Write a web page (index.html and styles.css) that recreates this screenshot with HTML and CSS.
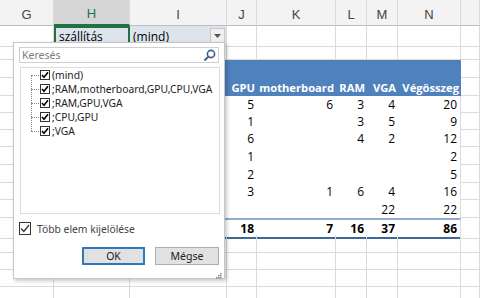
FILE: index.html
```html
<!DOCTYPE html>
<html>
<head>
    <title>Kimutatás szűrő</title>
    <link rel="stylesheet" href="styles.css">
</head>
<body>
    <div class="sheet">
        <div class="row head">
            <div class="colhead">G</div>
            <div class="colhead active">H</div>
            <div class="colhead">I</div>
            <div class="colhead">J</div>
            <div class="colhead">K</div>
            <div class="colhead">L</div>
            <div class="colhead">M</div>
            <div class="colhead">N</div>
            <div class="colhead"></div>
        </div>
        <div class="row">
            <div class="c"></div>
            <div class="c filter selected">szállítás</div>
            <div class="c filter value">(mind)<span class="dropbtn"><svg width="7" height="4" viewBox="0 0 7 4"><path d="M0 0h7L3.5 4z" fill="#555"/></svg></span></div>
            <div class="c"></div><div class="c"></div><div class="c"></div><div class="c"></div><div class="c"></div><div class="c"></div>
        </div>
        <div class="row">
            <div class="c"></div><div class="c"></div><div class="c"></div><div class="c"></div><div class="c"></div><div class="c"></div><div class="c"></div><div class="c"></div><div class="c"></div>
        </div>
        <div class="row tall">
            <div class="c"></div>
            <div class="ph"></div><div class="ph"></div><div class="ph"></div><div class="ph"></div><div class="ph"></div><div class="ph"></div><div class="ph"></div>
            <div class="c"></div>
        </div>
        <div class="row tall">
            <div class="c"></div>
            <div class="ph"></div><div class="ph"></div>
            <div class="ph">GPU</div>
            <div class="ph">motherboard</div>
            <div class="ph">RAM</div>
            <div class="ph">VGA</div>
            <div class="ph">Végösszeg</div>
            <div class="c"></div>
        </div>
        <div class="row">
            <div class="c"></div>
            <div class="pv"></div><div class="pv"></div>
            <div class="pv">5</div><div class="pv">6</div><div class="pv">3</div><div class="pv">4</div><div class="pv last">20</div>
            <div class="c"></div>
        </div>
        <div class="row">
            <div class="c"></div>
            <div class="pv"></div><div class="pv"></div>
            <div class="pv">1</div><div class="pv"></div><div class="pv">3</div><div class="pv">5</div><div class="pv last">9</div>
            <div class="c"></div>
        </div>
        <div class="row">
            <div class="c"></div>
            <div class="pv"></div><div class="pv"></div>
            <div class="pv">6</div><div class="pv"></div><div class="pv">4</div><div class="pv">2</div><div class="pv last">12</div>
            <div class="c"></div>
        </div>
        <div class="row tall">
            <div class="c"></div>
            <div class="pv"></div><div class="pv"></div>
            <div class="pv">1</div><div class="pv"></div><div class="pv"></div><div class="pv"></div><div class="pv last">2</div>
            <div class="c"></div>
        </div>
        <div class="row tall">
            <div class="c"></div>
            <div class="pv"></div><div class="pv"></div>
            <div class="pv">2</div><div class="pv"></div><div class="pv"></div><div class="pv"></div><div class="pv last">5</div>
            <div class="c"></div>
        </div>
        <div class="row">
            <div class="c"></div>
            <div class="pv"></div><div class="pv"></div>
            <div class="pv">3</div><div class="pv">1</div><div class="pv">6</div><div class="pv">4</div><div class="pv last">16</div>
            <div class="c"></div>
        </div>
        <div class="row tall">
            <div class="c"></div>
            <div class="pv"></div><div class="pv"></div>
            <div class="pv"></div><div class="pv"></div><div class="pv"></div><div class="pv">22</div><div class="pv last">22</div>
            <div class="c"></div>
        </div>
        <div class="row">
            <div class="c"></div>
            <div class="tot"></div><div class="tot"></div>
            <div class="tot">18</div><div class="tot">7</div><div class="tot">16</div><div class="tot">37</div><div class="tot last">86</div>
            <div class="c"></div>
        </div>
        <div class="row tall">
            <div class="c"></div><div class="c"></div><div class="c"></div><div class="c"></div><div class="c"></div><div class="c"></div><div class="c"></div><div class="c"></div><div class="c"></div>
        </div>
        <div class="row">
            <div class="c"></div><div class="c"></div><div class="c"></div><div class="c"></div><div class="c"></div><div class="c"></div><div class="c"></div><div class="c"></div><div class="c"></div>
        </div>
        <div class="row">
            <div class="c"></div><div class="c"></div><div class="c"></div><div class="c"></div><div class="c"></div><div class="c"></div><div class="c"></div><div class="c"></div><div class="c"></div>
        </div>
        <div class="row">
            <div class="c"></div><div class="c"></div><div class="c"></div><div class="c"></div><div class="c"></div><div class="c"></div><div class="c"></div><div class="c"></div><div class="c"></div>
        </div>
    </div>

    <div class="filterPanel">
        <div class="search">
            <span>Keresés</span>
            <svg width="13" height="13" viewBox="0 0 13 13"><circle cx="8" cy="5" r="3.6" fill="none" stroke="#3a5f8a" stroke-width="1.6"/><path d="M5.4 7.6L1.5 11.5" stroke="#3a5f8a" stroke-width="2"/></svg>
        </div>
        <div class="itemList">
            <div class="tree">
                <div class="item"><span class="box"><svg width="8" height="8" viewBox="0 0 8 8"><path d="M1 4l2 2.2L7 1.3" fill="none" stroke="#000" stroke-width="1.6"/></svg></span>(mind)</div>
                <div class="item"><span class="box"><svg width="8" height="8" viewBox="0 0 8 8"><path d="M1 4l2 2.2L7 1.3" fill="none" stroke="#000" stroke-width="1.6"/></svg></span>;RAM,motherboard,GPU,CPU,VGA</div>
                <div class="item"><span class="box"><svg width="8" height="8" viewBox="0 0 8 8"><path d="M1 4l2 2.2L7 1.3" fill="none" stroke="#000" stroke-width="1.6"/></svg></span>;RAM,GPU,VGA</div>
                <div class="item"><span class="box"><svg width="8" height="8" viewBox="0 0 8 8"><path d="M1 4l2 2.2L7 1.3" fill="none" stroke="#000" stroke-width="1.6"/></svg></span>;CPU,GPU</div>
                <div class="item"><span class="box"><svg width="8" height="8" viewBox="0 0 8 8"><path d="M1 4l2 2.2L7 1.3" fill="none" stroke="#000" stroke-width="1.6"/></svg></span>;VGA</div>
            </div>
        </div>
        <div class="multi">
            <span class="bigbox"><svg width="10" height="9" viewBox="0 0 10 9"><path d="M1 4.5l2.8 3L9 1" fill="none" stroke="#333" stroke-width="1.3"/></svg></span>
            Több elem kijelölése
        </div>
        <div class="buttons">
            <button class="ok">OK</button>
            <button>Mégse</button>
        </div>
        <div class="grip"><svg width="6" height="6" viewBox="0 0 6 6"><rect x="4" y="0" width="1.5" height="1.5" fill="#888"/><rect x="2" y="2" width="1.5" height="1.5" fill="#888"/><rect x="4" y="2" width="1.5" height="1.5" fill="#888"/><rect x="0" y="4" width="1.5" height="1.5" fill="#888"/><rect x="2" y="4" width="1.5" height="1.5" fill="#888"/><rect x="4" y="4" width="1.5" height="1.5" fill="#888"/></svg></div>
    </div>
</body>
</html>
```

FILE: styles.css
```css
body {
    margin: 0;
    font-family: "Open Sans", "Liberation Sans", sans-serif;
    font-size: 12px;
    color: #000;
    background-color: #fff;
    overflow: hidden;
}
.sheet {
    width: 480px;
}
.row {
    display: grid;
    grid-template-columns: 54px 76px 97px 30px 79px 31px 31px 63px 1fr;
    height: 17px;
}
.row.tall {
    height: 18px;
}
.row.head {
    height: 26px;
}
.colhead {
    background-color: #f3f3f3;
    border-right: 1px solid #dadada;
    border-bottom: 1px solid #bebebe;
    color: #444;
    font-family: "Liberation Sans", sans-serif;
    font-size: 13px;
    display: flex;
    justify-content: center;
    align-items: flex-end;
    padding-bottom: 3px;
    box-sizing: border-box;
}
.colhead.active {
    background-color: #d6d6d6;
    color: #217346;
    border-bottom: 2px solid #217346;
}
.c, .pv, .ph, .tot {
    box-sizing: border-box;
    padding: 0 3px;
    display: flex;
    align-items: center;
    justify-content: flex-end;
    white-space: nowrap;
}
.c {
    border-right: 1px solid #dadada;
    border-bottom: 1px solid #dadada;
}
.pv {
    background-color: #fff;
}
.pv.last, .tot.last {
    border-right: 1px solid #dadada;
}
.ph {
    background-color: #4f81bd;
    color: #fff;
    font-weight: bold;
    font-size: 11.2px;
    padding: 0 2px 0 0;
}
.tot {
    font-weight: bold;
    border-top: 2px solid #91acd0;
    border-bottom: 2px solid #3d6699;
}
.filter {
    background-color: #dde4ee;
    justify-content: flex-start;
}
.filter.selected {
    border: 2px solid #217346;
    position: relative;
}
.filter.selected::after {
    content: "";
    position: absolute;
    right: -4px;
    bottom: -4px;
    width: 5px;
    height: 5px;
    background-color: #217346;
    border: 1px solid #fff;
}
.filter.value {
    justify-content: space-between;
    padding-right: 1px;
}
.dropbtn {
    width: 13px;
    height: 14px;
    background-color: #f0f0f0;
    border: 1px solid #c8c8c8;
    display: flex;
    align-items: center;
    justify-content: center;
}

/* filter dropdown */
.filterPanel {
    position: absolute;
    left: 13px;
    top: 42px;
    width: 212px;
    height: 237px;
    box-sizing: border-box;
    background-color: #fff;
    border: 1px solid #c6c6c6;
    box-shadow: 2px 2px 4px rgba(0, 0, 0, 0.22);
    padding: 4px 5px 0 5px;
    font-family: "Noto Sans", sans-serif;
    font-size: 10.3px;
    color: #222;
}
.search {
    width: 200px;
    height: 16px;
    box-sizing: border-box;
    border: 1px solid #cfcfcf;
    display: flex;
    align-items: center;
    justify-content: space-between;
    padding: 0 2px 0 2px;
    color: #7b7b7b;
    font-size: 10.5px;
}
.itemList {
    width: 200px;
    height: 147px;
    box-sizing: border-box;
    margin: 4px 0 0 1px;
    border: 1px solid #dcdcdc;
    padding-left: 19px;
}
.tree {
    position: relative;
}
.tree::before {
    content: "";
    position: absolute;
    left: -9px;
    top: 7px;
    bottom: 7px;
    border-left: 1px dotted #8a8a8a;
}
.item {
    position: relative;
    height: 14px;
    display: flex;
    align-items: center;
    white-space: nowrap;
}
.item::before {
    content: "";
    position: absolute;
    left: -9px;
    top: 7px;
    width: 8px;
    border-top: 1px dotted #8a8a8a;
}
.box {
    width: 10px;
    height: 10px;
    box-sizing: border-box;
    border: 1px solid #333;
    margin-right: 2px;
    display: flex;
    align-items: center;
    justify-content: center;
}
.multi {
    display: flex;
    align-items: center;
    height: 13px;
    margin-top: 8px;
    color: #444;
    font-size: 10.3px;
}
.bigbox {
    width: 12px;
    height: 13px;
    box-sizing: border-box;
    border: 1px solid #333;
    margin-right: 6px;
    display: flex;
    align-items: center;
    justify-content: center;
}
.buttons {
    display: flex;
    justify-content: flex-end;
    gap: 10px;
    margin-top: 12px;
}
button {
    width: 64px;
    height: 18px;
    box-sizing: border-box;
    background-color: #e1e1e1;
    border: 1px solid #adadad;
    font-family: "Noto Sans", sans-serif;
    font-size: 10.5px;
    color: #222;
    padding: 0;
}
button.ok {
    border: 2px solid #2f78c0;
    width: 63px;
}
.grip {
    display: flex;
    justify-content: flex-end;
    margin-top: 8px;
    margin-right: -3px;
}
```
